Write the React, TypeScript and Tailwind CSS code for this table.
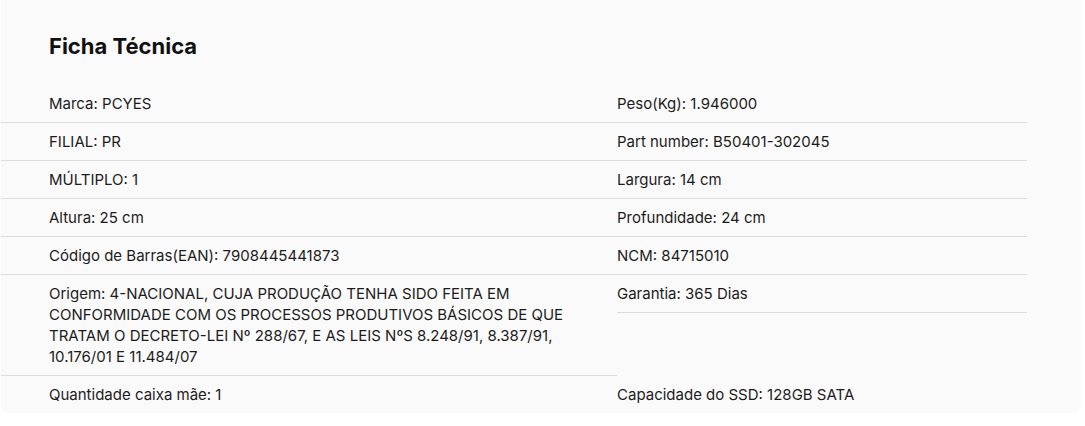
import type { ReactNode } from "react"

const left: ReactNode[] = [
  "Marca: PCYES",
  "FILIAL: PR",
  "MÚLTIPLO: 1",
  "Altura: 25 cm",
  "Código de Barras(EAN): 7908445441873",
  <>
    Origem: 4-NACIONAL, CUJA PRODUÇÃO TENHA SIDO FEITA EM
    <br />
    CONFORMIDADE COM OS PROCESSOS PRODUTIVOS BÁSICOS DE QUE
    <br />
    TRATAM O DECRETO-LEI Nº 288/67, E AS LEIS NºS 8.248/91, 8.387/91,
    <br />
    10.176/01 E 11.484/07
  </>,
  "Quantidade caixa mãe: 1",
]

const right = [
  "Peso(Kg): 1.946000",
  "Part number: B50401-302045",
  "Largura: 14 cm",
  "Profundidade: 24 cm",
  "NCM: 84715010",
  "Garantia: 365 Dias",
  "Capacidade do SSD: 128GB SATA",
]

export default function App() {
  return (
    <div className="min-h-screen bg-white font-['Inter',sans-serif] text-[#1c1c1c]">
      <section className="ml-px w-[1080px] rounded-b-lg bg-[#fafafa] pt-[32px]">
        <h2 className="pl-12 text-[22px] font-bold leading-[28px] text-[#111]">
          Ficha Técnica
        </h2>

        <div className="mt-[25px] grid grid-cols-[616px_410px] items-start text-[15px] leading-[21px]">
          {right.map((r, i) => (
            <div key={r} className="contents">
              <div
                className={`whitespace-nowrap py-2 pl-12 ${
                  i < right.length - 1 ? "border-b border-[#dddddd]" : ""
                }`}
              >
                {left[i]}
              </div>
              <div
                className={`py-2 ${
                  i < right.length - 1 ? "border-b border-[#dddddd]" : ""
                }`}
              >
                {r}
              </div>
            </div>
          ))}
        </div>
      </section>
    </div>
  )
}
